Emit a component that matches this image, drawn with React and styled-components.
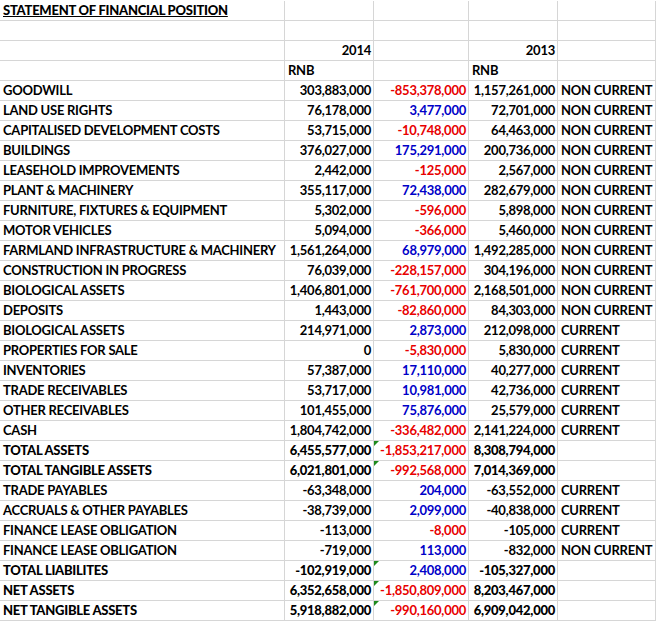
import React from 'react';
import styled, { createGlobalStyle } from 'styled-components';

const GlobalStyle = createGlobalStyle`
  body {
    margin: 0;
    background: #ffffff;
  }
`;

const Sheet = styled.div`
  display: grid;
  grid-template-columns: 285px 89px 95px 89px 98px;
  grid-auto-rows: 20px;
  width: 656px;
  padding-top: 1px;
  font-family: Lato, 'Liberation Sans', sans-serif;
  font-size: 13px;
  color: #000000;
`;

const Cell = styled.div`
  position: relative;
  box-sizing: border-box;
  border-right: 1px solid #d6d6d6;
  border-bottom: 1px solid #d6d6d6;
  padding: 0 2px 2px 3px;
  display: flex;
  align-items: flex-end;
  justify-content: ${(p) => (p.$right ? 'flex-end' : 'flex-start')};
  font-weight: ${(p) => (p.$heavy ? 900 : 700)};
  color: ${(p) => (p.$tone === 'red' ? '#e80000' : p.$tone === 'blue' ? '#0000c8' : '#000000')};
  white-space: nowrap;
  letter-spacing: -0.25px;
`;

const Title = styled.span`
  font-weight: 900;
  text-decoration: underline;
`;

// little green error marker excel puts in the corner
const Marker = styled.span`
  position: absolute;
  top: 0;
  left: 0;
  width: 0;
  height: 0;
  border-top: 5px solid #1c8a1c;
  border-right: 5px solid transparent;
`;

const rows = [
  ['GOODWILL', '303,883,000', '-853,378,000', '1,157,261,000', 'NON CURRENT'],
  ['LAND USE RIGHTS', '76,178,000', '3,477,000', '72,701,000', 'NON CURRENT'],
  ['CAPITALISED DEVELOPMENT COSTS', '53,715,000', '-10,748,000', '64,463,000', 'NON CURRENT'],
  ['BUILDINGS', '376,027,000', '175,291,000', '200,736,000', 'NON CURRENT'],
  ['LEASEHOLD IMPROVEMENTS', '2,442,000', '-125,000', '2,567,000', 'NON CURRENT'],
  ['PLANT & MACHINERY', '355,117,000', '72,438,000', '282,679,000', 'NON CURRENT'],
  ['FURNITURE, FIXTURES & EQUIPMENT', '5,302,000', '-596,000', '5,898,000', 'NON CURRENT'],
  ['MOTOR VEHICLES', '5,094,000', '-366,000', '5,460,000', 'NON CURRENT'],
  ['FARMLAND INFRASTRUCTURE & MACHINERY', '1,561,264,000', '68,979,000', '1,492,285,000', 'NON CURRENT'],
  ['CONSTRUCTION IN PROGRESS', '76,039,000', '-228,157,000', '304,196,000', 'NON CURRENT'],
  ['BIOLOGICAL ASSETS', '1,406,801,000', '-761,700,000', '2,168,501,000', 'NON CURRENT'],
  ['DEPOSITS', '1,443,000', '-82,860,000', '84,303,000', 'NON CURRENT'],
  ['BIOLOGICAL ASSETS', '214,971,000', '2,873,000', '212,098,000', 'CURRENT'],
  ['PROPERTIES FOR SALE', '0', '-5,830,000', '5,830,000', 'CURRENT'],
  ['INVENTORIES', '57,387,000', '17,110,000', '40,277,000', 'CURRENT'],
  ['TRADE RECEIVABLES', '53,717,000', '10,981,000', '42,736,000', 'CURRENT'],
  ['OTHER RECEIVABLES', '101,455,000', '75,876,000', '25,579,000', 'CURRENT'],
  ['CASH', '1,804,742,000', '-336,482,000', '2,141,224,000', 'CURRENT'],
  ['TOTAL ASSETS', '6,455,577,000', '-1,853,217,000', '8,308,794,000', '', true],
  ['TOTAL TANGIBLE ASSETS', '6,021,801,000', '-992,568,000', '7,014,369,000', '', true],
  ['TRADE PAYABLES', '-63,348,000', '204,000', '-63,552,000', 'CURRENT'],
  ['ACCRUALS & OTHER PAYABLES', '-38,739,000', '2,099,000', '-40,838,000', 'CURRENT'],
  ['FINANCE LEASE OBLIGATION', '-113,000', '-8,000', '-105,000', 'CURRENT'],
  ['FINANCE LEASE OBLIGATION', '-719,000', '113,000', '-832,000', 'NON CURRENT'],
  ['TOTAL LIABILITES', '-102,919,000', '2,408,000', '-105,327,000', '', true],
  ['NET ASSETS', '6,352,658,000', '-1,850,809,000', '8,203,467,000', '', true],
  ['NET TANGIBLE ASSETS', '5,918,882,000', '-990,160,000', '6,909,042,000', '', true],
];

export default function App() {
  return (
    <>
      <GlobalStyle />
      <Sheet>
        <Cell><Title>STATEMENT OF FINANCIAL POSITION</Title></Cell>
        <Cell /><Cell /><Cell /><Cell />

        <Cell /><Cell /><Cell /><Cell /><Cell />

        <Cell />
        <Cell $right>2014</Cell>
        <Cell />
        <Cell $right>2013</Cell>
        <Cell />

        <Cell />
        <Cell>RNB</Cell>
        <Cell />
        <Cell>RNB</Cell>
        <Cell />

        {rows.map(([label, y14, diff, y13, kind, total], i) => (
          <React.Fragment key={i}>
            <Cell $heavy={total}>{label}</Cell>
            <Cell $right $heavy={total}>{y14}</Cell>
            {/* 차이 컬럼: 음수는 빨강, 양수는 파랑 */}
            <Cell $right $tone={diff.startsWith('-') ? 'red' : 'blue'}>
              {total && <Marker />}
              {diff}
            </Cell>
            <Cell $right $heavy={total}>{y13}</Cell>
            <Cell>{kind}</Cell>
          </React.Fragment>
        ))}
      </Sheet>
    </>
  );
}
